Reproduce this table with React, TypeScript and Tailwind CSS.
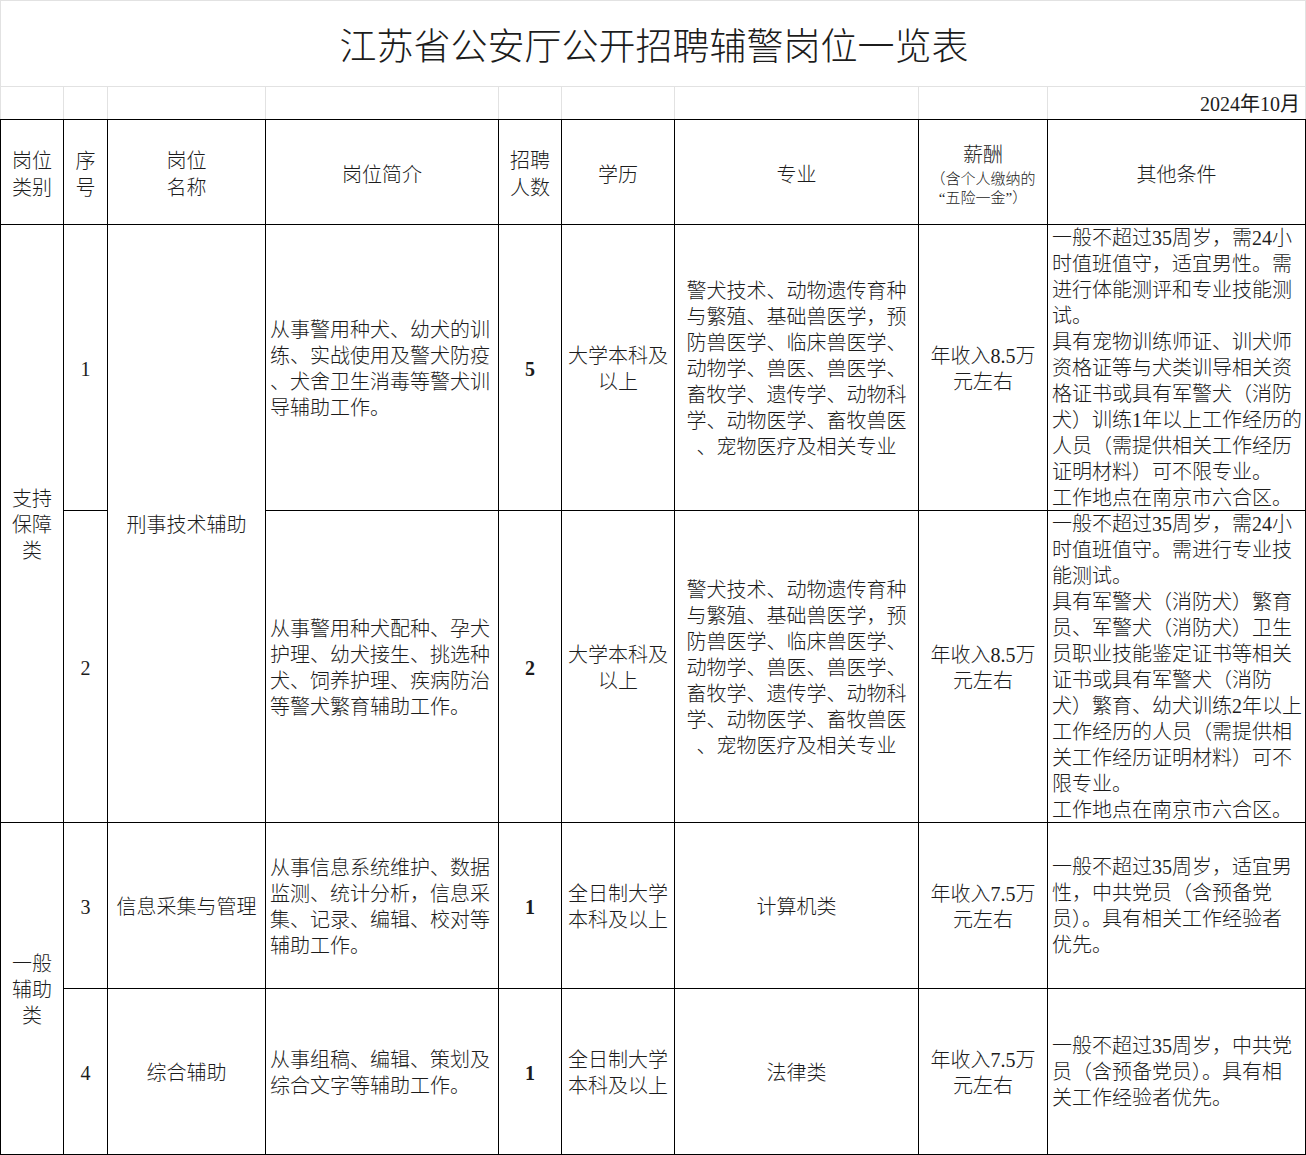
import React from "react";

const font = "font-['Liberation_Serif','Noto_Sans_CJK_SC',serif]";

type Row = {
  seq: string;
  intro: string[];
  count: string;
  edu: string[];
  major: string[];
  pay: string[];
  other: string[];
};

const rows: Row[] = [
  {
    seq: "1",
    intro: ["从事警用种犬、幼犬的训", "练、实战使用及警犬防疫", "、犬舍卫生消毒等警犬训", "导辅助工作。"],
    count: "5",
    edu: ["大学本科及", "以上"],
    major: [
      "警犬技术、动物遗传育种",
      "与繁殖、基础兽医学，预",
      "防兽医学、临床兽医学、",
      "动物学、兽医、兽医学、",
      "畜牧学、遗传学、动物科",
      "学、动物医学、畜牧兽医",
      "、宠物医疗及相关专业",
    ],
    pay: ["年收入8.5万", "元左右"],
    other: [
      "一般不超过35周岁，需24小",
      "时值班值守，适宜男性。需",
      "进行体能测评和专业技能测",
      "试。",
      "具有宠物训练师证、训犬师",
      "资格证等与犬类训导相关资",
      "格证书或具有军警犬（消防",
      "犬）训练1年以上工作经历的",
      "人员（需提供相关工作经历",
      "证明材料）可不限专业。",
      "工作地点在南京市六合区。",
    ],
  },
  {
    seq: "2",
    intro: ["从事警用种犬配种、孕犬", "护理、幼犬接生、挑选种", "犬、饲养护理、疾病防治", "等警犬繁育辅助工作。"],
    count: "2",
    edu: ["大学本科及", "以上"],
    major: [
      "警犬技术、动物遗传育种",
      "与繁殖、基础兽医学，预",
      "防兽医学、临床兽医学、",
      "动物学、兽医、兽医学、",
      "畜牧学、遗传学、动物科",
      "学、动物医学、畜牧兽医",
      "、宠物医疗及相关专业",
    ],
    pay: ["年收入8.5万", "元左右"],
    other: [
      "一般不超过35周岁，需24小",
      "时值班值守。需进行专业技",
      "能测试。",
      "具有军警犬（消防犬）繁育",
      "员、军警犬（消防犬）卫生",
      "员职业技能鉴定证书等相关",
      "证书或具有军警犬（消防",
      "犬）繁育、幼犬训练2年以上",
      "工作经历的人员（需提供相",
      "关工作经历证明材料）可不",
      "限专业。",
      "工作地点在南京市六合区。",
    ],
  },
  {
    seq: "3",
    intro: ["从事信息系统维护、数据", "监测、统计分析，信息采", "集、记录、编辑、校对等", "辅助工作。"],
    count: "1",
    edu: ["全日制大学", "本科及以上"],
    major: ["计算机类"],
    pay: ["年收入7.5万", "元左右"],
    other: ["一般不超过35周岁，适宜男", "性，中共党员（含预备党", "员）。具有相关工作经验者", "优先。"],
  },
  {
    seq: "4",
    intro: ["从事组稿、编辑、策划及", "综合文字等辅助工作。"],
    count: "1",
    edu: ["全日制大学", "本科及以上"],
    major: ["法律类"],
    pay: ["年收入7.5万", "元左右"],
    other: ["一般不超过35周岁，中共党", "员（含预备党员）。具有相", "关工作经验者优先。"],
  },
];

function Lines({ lines, align = "center", tall }: { lines: string[]; align?: "center" | "left"; tall?: boolean }) {
  return (
    <div className={`${align === "left" ? "text-left" : "text-center"} ${tall ? "leading-[27px]" : ""}`}>
      {lines.map((l, i) => (
        <div key={i} className="whitespace-nowrap">
          {l}
        </div>
      ))}
    </div>
  );
}

const cell = "flex items-center justify-center border-r border-b border-black overflow-visible";
const head = `${cell} border-t pt-[5px]`;

export default function App() {
  return (
    <div className={`w-[1306px] h-[1155px] bg-white text-[#1c1c1c] ${font} font-light text-[20px] leading-[26px]`}>
      <div className="grid grid-cols-[64px_44px_158px_233px_63px_113px_244px_129px_258px] grid-rows-[87px_32px_106px_286px_312px_166px_166px]">
        {/* title */}
        <div className="col-span-9 flex items-center justify-center border border-[#e2e2e2] text-[37px] leading-[44px] pt-[8px] pl-[2px]">
          江苏省公安厅公开招聘辅警岗位一览表
        </div>

        {/* date row */}
        <div className="border-l border-r border-[#e2e2e2]" />
        <div className="border-r border-[#e2e2e2]" />
        <div className="border-r border-[#e2e2e2]" />
        <div className="border-r border-[#e2e2e2]" />
        <div className="border-r border-[#e2e2e2]" />
        <div className="border-r border-[#e2e2e2]" />
        <div className="border-r border-[#e2e2e2]" />
        <div className="border-r border-[#e2e2e2]" />
        <div className="flex items-center justify-end pr-[5px] pt-[2px] border-r border-[#e2e2e2] font-normal">2024年10月</div>

        {/* header */}
        <div className={`${head} border-l`}>
          <Lines lines={["岗位", "类别"]} tall />
        </div>
        <div className={head}>
          <Lines lines={["序", "号"]} tall />
        </div>
        <div className={head}>
          <Lines lines={["岗位", "名称"]} tall />
        </div>
        <div className={head}>岗位简介</div>
        <div className={head}>
          <Lines lines={["招聘", "人数"]} tall />
        </div>
        <div className={head}>学历</div>
        <div className={head}>专业</div>
        <div className={`${head} flex-col`}>
          <div className="mb-[2px]">薪酬</div>
          <div className="text-[15px] leading-[19px]">（含个人缴纳的</div>
          <div className="text-[15px] leading-[19px]">“五险一金”）</div>
        </div>
        <div className={head}>其他条件</div>

        {/* body */}
        {rows.map((r, idx) => (
          <React.Fragment key={r.seq}>
            {idx === 0 && (
              <div className={`${cell} border-l row-span-2 pt-[2px]`}>
                <Lines lines={["支持", "保障", "类"]} />
              </div>
            )}
            {idx === 2 && (
              <div className={`${cell} border-l row-span-2 pt-[2px]`}>
                <Lines lines={["一般", "辅助", "类"]} />
              </div>
            )}
            <div className={`${cell} font-normal pt-[2px]`}>{r.seq}</div>
            {idx === 0 && <div className={`${cell} row-span-2 pt-[2px]`}>刑事技术辅助</div>}
            {idx === 2 && <div className={`${cell} pt-[2px]`}>信息采集与管理</div>}
            {idx === 3 && <div className={`${cell} pt-[2px]`}>综合辅助</div>}
            <div className={`${cell} justify-start pl-1 pt-[2px]`}>
              <Lines lines={r.intro} align="left" />
            </div>
            <div className={`${cell} font-bold pt-[2px]`}>{r.count}</div>
            <div className={`${cell} pt-[2px]`}>
              <Lines lines={r.edu} />
            </div>
            <div className={`${cell} pt-[2px]`}>
              <Lines lines={r.major} />
            </div>
            <div className={`${cell} pt-[2px]`}>
              <Lines lines={r.pay} />
            </div>
            <div className={`${cell} justify-start pl-1 pt-[1px]`}>
              <Lines lines={r.other} align="left" />
            </div>
          </React.Fragment>
        ))}
      </div>
    </div>
  );
}
